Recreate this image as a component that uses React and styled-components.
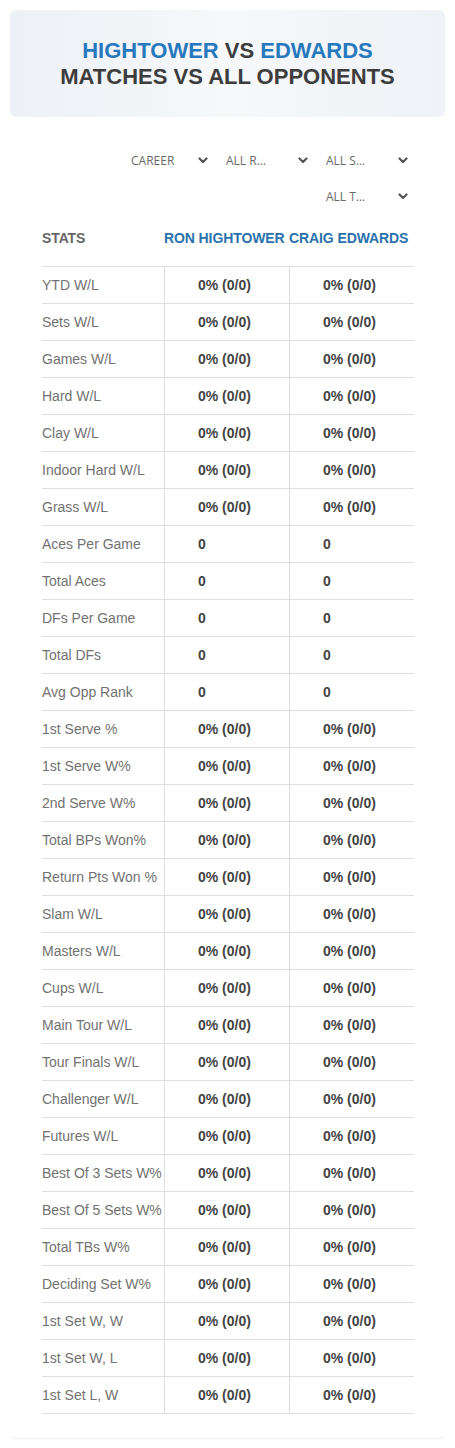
import React from "react";
import styled, { createGlobalStyle } from "styled-components";

const Global = createGlobalStyle`
  html, body { margin: 0; padding: 0; background: #fff; }
  body { font-family: "Liberation Sans", Arial, sans-serif; }
`;

const Page = styled.div`
  padding: 10px 10px 9px;
`;

const Card = styled.div`
  background: #fff;
  border-radius: 6px;
  box-shadow: 0 1px 2px rgba(0, 0, 0, 0.07);
  overflow: hidden;
`;

const Header = styled.div`
  height: 107px;
  display: flex;
  flex-direction: column;
  align-items: center;
  justify-content: center;
  background: linear-gradient(90deg, #edf1f5 0%, #f6f8fa 50%, #eff2f6 100%);
  border-radius: 6px;
`;

const TitleLine = styled.div`
  font-family: "Liberation Sans", Arial, sans-serif;
  font-weight: 700;
  font-size: 22px;
  line-height: 26px;
  color: #3d3d3d;
  text-transform: uppercase;
`;

const Blue = styled.span`
  color: #2878bd;
`;

const Body = styled.div`
  padding: 29px 31px 24px 32px;
`;

const Filters = styled.div`
  display: flex;
  flex-wrap: wrap;
  justify-content: flex-end;
  gap: 8px 5px;
`;

const Select = styled.div`
  width: 95px;
  height: 28px;
  box-sizing: border-box;
  padding: 0 6px 0 ${(p) => p.$pad || 7}px;
  display: flex;
  align-items: center;
  justify-content: space-between;
  font-family: "Open Sans", "Noto Sans", sans-serif;
  font-size: 12px;
  color: #6a6a6a;
`;

const Chevron = () => (
  <svg width="10" height="7" viewBox="0 0 10 7">
    <path d="M1.5 1.5 L5 5 L8.5 1.5" fill="none" stroke="#555" strokeWidth="2.2" strokeLinecap="round" strokeLinejoin="round" />
  </svg>
);

const Table = styled.div`
  display: grid;
  grid-template-columns: 122px 125px 1fr;
`;

const HeadCell = styled.div`
  padding: 12px 0;
  line-height: 32px;
  font-size: 14px;
  font-weight: 700;
  color: ${(p) => (p.$blue ? "#2b72ad" : "#666")};
  white-space: nowrap;
  border-bottom: 1px solid #dedede;
  letter-spacing: -0.1px;
`;

const LabelCell = styled.div`
  height: 36px;
  line-height: 36px;
  border-bottom: 1px solid #dedede;
  font-size: 14px;
  color: #727272;
  white-space: nowrap;
`;

const ValueCell = styled.div`
  height: 36px;
  line-height: 36px;
  border-bottom: 1px solid #dedede;
  border-left: 1px solid #dedede;
  padding-left: 33px;
  font-size: 14px;
  font-weight: 700;
  color: #444;
  white-space: nowrap;
`;

const pct = "0% (0/0)";
const rows = [
  ["YTD W/L", pct],
  ["Sets W/L", pct],
  ["Games W/L", pct],
  ["Hard W/L", pct],
  ["Clay W/L", pct],
  ["Indoor Hard W/L", pct],
  ["Grass W/L", pct],
  ["Aces Per Game", "0"],
  ["Total Aces", "0"],
  ["DFs Per Game", "0"],
  ["Total DFs", "0"],
  ["Avg Opp Rank", "0"],
  ["1st Serve %", pct],
  ["1st Serve W%", pct],
  ["2nd Serve W%", pct],
  ["Total BPs Won%", pct],
  ["Return Pts Won %", pct],
  ["Slam W/L", pct],
  ["Masters W/L", pct],
  ["Cups W/L", pct],
  ["Main Tour W/L", pct],
  ["Tour Finals W/L", pct],
  ["Challenger W/L", pct],
  ["Futures W/L", pct],
  ["Best Of 3 Sets W%", pct],
  ["Best Of 5 Sets W%", pct],
  ["Total TBs W%", pct],
  ["Deciding Set W%", pct],
  ["1st Set W, W", pct],
  ["1st Set W, L", pct],
  ["1st Set L, W", pct],
];

const filters = [
  { label: "CAREER", pad: 12 },
  { label: "ALL R…" },
  { label: "ALL S…" },
  { label: "ALL T…" },
];

export default function App() {
  return (
    <>
      <Global />
      <Page>
        <Card>
          <Header>
            <TitleLine>
              <Blue>Hightower</Blue> vs <Blue>Edwards</Blue>
            </TitleLine>
            <TitleLine>Matches vs all opponents</TitleLine>
          </Header>
          <Body>
            <Filters>
              {filters.map((f) => (
                <Select key={f.label} $pad={f.pad}>
                  <span>{f.label}</span>
                  <Chevron />
                </Select>
              ))}
            </Filters>
            <Table>
              <HeadCell>STATS</HeadCell>
              <HeadCell $blue>RON HIGHTOWER</HeadCell>
              <HeadCell $blue>CRAIG EDWARDS</HeadCell>
              {rows.map(([label, v]) => (
                <React.Fragment key={label}>
                  <LabelCell>{label}</LabelCell>
                  <ValueCell>{v}</ValueCell>
                  <ValueCell>{v}</ValueCell>
                </React.Fragment>
              ))}
            </Table>
          </Body>
        </Card>
      </Page>
    </>
  );
}
